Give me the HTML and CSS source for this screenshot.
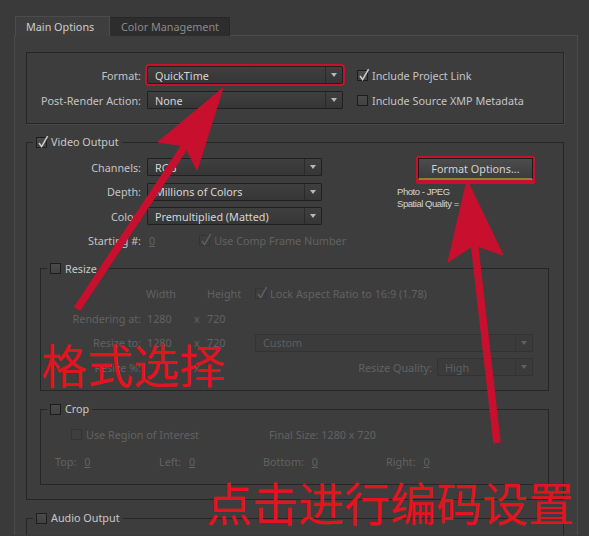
FILE: index.html
```html
<!DOCTYPE html>
<html>
<head>
<meta charset="utf-8">
<link rel="stylesheet" href="styles.css">
</head>
<body>
<div class="tabs">
  <div class="tab active">Main Options</div>
  <div class="tab inactive">Color Management</div>
</div>
<div class="panel">
  <div class="fbox">
    <div class="frow">
      <span class="lbl">Format:</span>
      <div class="dd w196 hl"><span class="t">QuickTime</span><span class="ar"></span></div>
      <span class="ck ml14"><span class="cb"><svg viewBox="0 0 11 11"><path d="M2 5 L4.6 8.6 L10.6 -1.8"/></svg></span>Include Project Link</span>
    </div>
    <div class="frow">
      <span class="lbl">Post-Render Action:</span>
      <div class="dd w196"><span class="t">None</span><span class="ar"></span></div>
      <span class="ck ml14"><span class="cb"></span>Include Source XMP Metadata</span>
    </div>
  </div>

  <fieldset class="video">
    <legend><span class="cb"><svg viewBox="0 0 11 11"><path d="M2 5 L4.6 8.6 L10.6 -1.8"/></svg></span>Video Output</legend>
    <div class="vo-body">
      <div class="vo-top">
        <div class="vo-rows">
          <div class="row"><span class="lbl">Channels:</span><div class="dd w175"><span class="t">RGB</span><span class="ar"></span></div></div>
          <div class="row"><span class="lbl">Depth:</span><div class="dd w175"><span class="t">Millions of Colors</span><span class="ar"></span></div></div>
          <div class="row"><span class="lbl">Color:</span><div class="dd w175"><span class="t">Premultiplied (Matted)</span><span class="ar"></span></div></div>
          <div class="row"><span class="lbl">Starting #:</span><span class="val dim u">0</span><span class="ck dis ml40"><span class="cb"><svg viewBox="0 0 11 11"><path d="M2 5 L4.6 8.6 L10.6 -1.8"/></svg></span>Use Comp Frame Number</span></div>
        </div>
        <div class="vo-info">
          <div class="hl-btn"><div class="btn">Format Options...</div></div>
          <div class="info">Photo - JPEG<br>Spatial Quality = 100</div>
        </div>
      </div>

      <fieldset class="sub resize">
        <legend><span class="cb"></span>Resize</legend>
        <div class="rs-body">
          <span></span><span class="dim nudge">Width</span><span></span><span class="dim">Height</span>
          <span class="ck dis"><span class="cb"><svg viewBox="0 0 11 11"><path d="M2 5 L4.6 8.6 L10.6 -1.8"/></svg></span>Lock Aspect Ratio to 16:9 (1.78)</span>

          <span class="rl dim">Rendering at:</span><span class="dim">1280</span><span class="dim">x</span><span class="dim">720</span><span></span>

          <span class="rl dim">Resize to:</span><span class="dim">1280</span><span class="dim">x</span><span class="dim">720</span>
          <div class="dd dis w278"><span class="t">Custom</span><span class="ar"></span></div>

          <span class="rl dim">Resize %:</span><span></span><span class="dim">x</span><span></span>
          <div class="rq"><span class="dim">Resize Quality:</span><div class="dd dis w96"><span class="t">High</span><span class="ar"></span></div></div>
        </div>
      </fieldset>

      <fieldset class="sub crop">
        <legend><span class="cb"></span>Crop</legend>
        <div class="crop-body">
          <div class="c1">
            <span class="ck dis w198"><span class="cb"></span>Use Region of Interest</span>
            <span class="dim">Final Size: 1280 x 720</span>
          </div>
          <div class="c2">
            <span class="dim w104">Top: <span class="u">0</span></span>
            <span class="dim w104">Left: <span class="u">0</span></span>
            <span class="dim w123">Bottom: <span class="u">0</span></span>
            <span class="dim">Right: <span class="u">0</span></span>
          </div>
        </div>
      </fieldset>
    </div>
  </fieldset>

  <fieldset class="audio">
    <legend><span class="cb"></span>Audio Output</legend>
    <div class="au-body"></div>
  </fieldset>
</div>

<svg class="overlay" width="589" height="536" viewBox="0 0 589 536">
  <g fill="#c8102e" stroke="#c8102e">
    <line x1="77" y1="309" x2="187" y2="143" stroke-width="7.5"/>
    <polygon points="223,88 158,142 185,146 197,170" stroke-width="1" stroke-linejoin="round"/>
    <line x1="497" y1="443" x2="474" y2="240" stroke-width="7.5"/>
    <polygon points="467,180 448,262 474,245 503,255" stroke-width="1" stroke-linejoin="round"/>
  </g>
</svg>
<div class="note note1">格式选择</div>
<div class="note note2">点击进行编码设置</div>
</body>
</html>
```
FILE: styles.css
```css
* { box-sizing: border-box; }
body {
  margin: 0;
  width: 589px;
  height: 536px;
  overflow: hidden;
  position: relative;
  background: #3a3a3a;
  font-family: "Noto Sans", "DejaVu Sans", sans-serif;
  font-size: 10.8px;
  color: #c6c6c6;
}
.tabs {
  display: flex;
  padding: 16px 0 0 15px;
  position: relative;
  z-index: 1;
  margin-bottom: -1px;
}
.tab { white-space: nowrap; }
.tab.active {
  width: 95px;
  height: 20px;
  line-height: 19px;
  padding-left: 10px;
  background: #3e3e3e;
  border: 1px solid #4b4b4b;
  border-bottom: none;
  color: #cdcdcd;
}
.tab.inactive {
  width: 120px;
  height: 19px;
  margin-top: 1px;
  line-height: 17px;
  padding-left: 11px;
  background: #2d2d2d;
  border-top: 1px solid #272727;
  border-right: 1px solid #272727;
  color: #8a8a8a;
}
.panel {
  margin-left: 14px;
  width: 564px;
  height: 500px;
  border: 1px solid #4b4b4b;
  border-bottom: none;
  background: #3d3d3d;
  padding: 16px 13px 0 11px;
  overflow: hidden;
}
.fbox {
  height: 72px;
  border: 1px solid #262626;
  box-shadow: 1px 1px 0 #474747;
  padding-top: 13px;
}
.frow, .row {
  display: flex;
  align-items: center;
  height: 18px;
}
.frow + .frow { margin-top: 7px; }
.lbl {
  flex: none;
  width: 114px;
  margin-right: 6px;
  text-align: right;
  white-space: nowrap;
  color: #c4c4c4;
}
.dd {
  flex: none;
  display: flex;
  align-items: center;
  height: 18px;
  border: 1px solid #202020;
  border-radius: 1px;
  background: linear-gradient(#3f3f3f, #363636);
  color: #d6d6d6;
  padding-left: 7px;
  white-space: nowrap;
}
.dd .t { flex: 1; overflow: hidden; }
.ar {
  width: 17px;
  align-self: stretch;
  border-left: 1px solid #2a2a2a;
  display: flex;
  align-items: center;
  justify-content: center;
}
.ar::before {
  content: "";
  border-left: 3.5px solid transparent;
  border-right: 3.5px solid transparent;
  border-top: 4px solid #b8b8b8;
}
.dd.dis { border-color: #333; background: #3b3b3b; color: #5f5f5f; }
.dd.dis .ar { border-left-color: #343434; }
.dd.dis .ar::before { border-top-color: #606060; }
.w196 { width: 196px; }
.w175 { width: 175px; }
.w278 { width: 278px; }
.w96 { width: 96px; margin-left: 5px; }
.hl { box-shadow: 0 0 0 2px #c8102e; border-radius: 2px; }
.ml14 { margin-left: 14px; }
.ml40 { margin-left: 44px; }

.ck { display: flex; align-items: center; gap: 4px; white-space: nowrap; color: #c4c4c4; }
.ck.dis { color: #626262; }
.cb {
  position: relative;
  flex: none;
  width: 11px;
  height: 11px;
  border: 1px solid #1d1d1d;
  background: linear-gradient(#4a4a4a, #424242);
}
.cb svg {
  position: absolute;
  left: 0;
  top: 0;
  width: 11px;
  height: 11px;
  overflow: visible;
  fill: none;
  stroke: #cacaca;
  stroke-width: 1.6;
}
.dis .cb { border-color: #343434; background: #3e3e3e; }
.dis .cb svg { stroke: #5e5e5e; }

fieldset {
  margin: 0;
  padding: 0;
  min-width: 0;
  border: 1px solid #262626;
}
legend {
  display: flex;
  align-items: center;
  gap: 4px;
  height: 12px;
  line-height: 12px;
  padding: 0 3px;
  margin-left: 6px;
  color: #c8c8c8;
}
.video { margin-top: 12px; }
.vo-body { padding: 10px 0 14px 0; }
.vo-top { display: flex; }
.vo-rows {
  flex: none;
  width: 295px;
  display: flex;
  flex-direction: column;
  gap: 6.5px;
}
.val { padding-left: 2px; }
.dim { color: #626262; white-space: nowrap; }
.u { text-decoration: underline; }
.vo-info { flex: none; margin-left: 75px; width: 138px; }
.hl-btn {
  width: 119px;
  height: 28px;
  margin-top: -2px;
  margin-left: 19px;
  border: 2px solid #c8102e;
  border-radius: 2px;
  background: #c8102e;
}
.btn {
  height: 22px;
  line-height: 19px;
  text-align: center;
  color: #d2d2d2;
  background: linear-gradient(#4c4c4c, #3c3c3c);
  border: 1px solid #1c1c1c;
  border-bottom: 2px solid #8f7f36;
}
.info {
  padding-top: 2px;
  font-family: "Liberation Sans", Arial, sans-serif;
  font-size: 9.5px;
  letter-spacing: -0.45px;
  line-height: 12px;
  color: #d4d4d4;
}
.sub { margin: 13px 14px 0 13px; }
.rs-body {
  padding: 10px 0 14px 0;
  display: grid;
  grid-template-columns: 106px 47px 13px 48px 278px;
  grid-auto-rows: 18px;
  row-gap: 6.5px;
  align-items: center;
}
.rl { text-align: right; padding-right: 6px; }
.nudge { margin-left: -1px; }
.rq { display: flex; align-items: center; justify-content: flex-end; }
.crop { margin-top: 12px; }
.crop-body { padding: 11px 0 15px 0; }
.c1, .c2 { display: flex; align-items: center; height: 16px; }
.c1 { padding-left: 30px; }
.c2 { margin-top: 11px; padding-left: 14px; }
.w198 { width: 198px; }
.w104 { width: 104px; }
.w123 { width: 123px; }
.c2 .u { margin-left: 5px; }
.audio { margin-top: 12px; }
.au-body { height: 30px; }

.overlay { position: absolute; left: 0; top: 0; }
.note {
  position: absolute;
  font-family: "Noto Sans CJK SC", "Noto Sans CJK JP", sans-serif;
  font-size: 46px;
  line-height: 46px;
  color: #e3131f;
  white-space: nowrap;
}
.note1 { left: 41px; top: 340px; }
.note2 { left: 206px; top: 478px; }
```
